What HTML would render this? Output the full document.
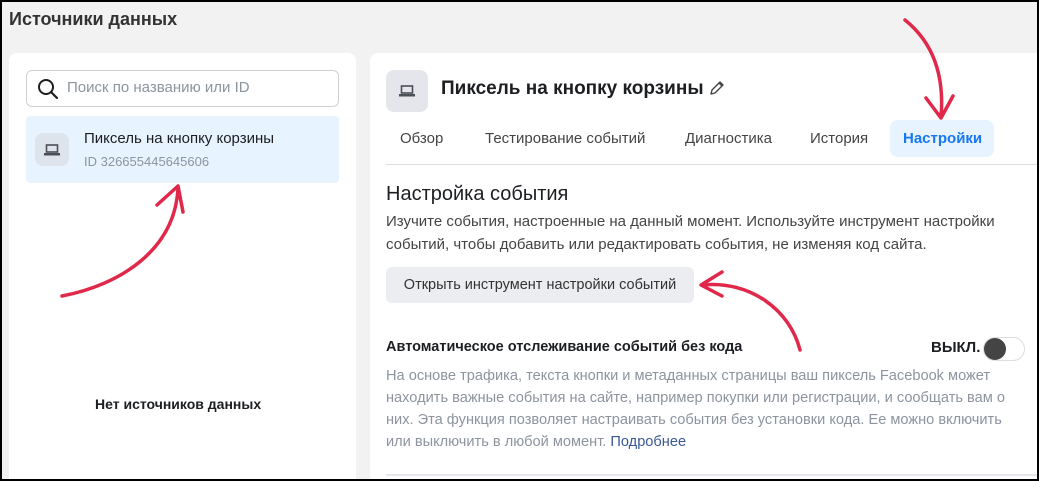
<!DOCTYPE html>
<html><head><meta charset="utf-8"><style>
*{box-sizing:border-box;margin:0;padding:0}
html{overflow:hidden}
body{width:1039px;height:481px;overflow:hidden;background:#f2f2f2;font-family:"Liberation Sans",Arial,sans-serif;color:#1c1e21;position:relative}
.frame{position:absolute;left:0;top:0;width:1039px;height:481px;border:2px solid #000;pointer-events:none;z-index:10}
.abs{position:absolute}
.ico{background:#e4e6eb;border-radius:8px;display:flex;align-items:center;justify-content:center}
</style></head><body>
<div class="frame"></div>
<div class="abs" style="left:9px;top:9px;font-size:18px;font-weight:bold;color:#333">Источники данных</div>

<div class="abs" style="left:9px;top:53px;width:347px;height:428px;background:#fff;border-radius:8px 8px 0 0"></div>
<div class="abs" style="left:26px;top:70px;width:313px;height:37px;border:1px solid #ccd0d5;border-radius:6px;background:#fff"></div>
<svg class="abs" style="left:36px;top:77px" width="24" height="24" viewBox="0 0 24 24"><circle cx="10" cy="10" r="7" fill="none" stroke="#1c1e21" stroke-width="2"/><path d="M15 15l6 6" stroke="#1c1e21" stroke-width="2.2" stroke-linecap="round"/></svg>
<div class="abs" style="left:67px;top:79px;font-size:15px;color:#8d949e">Поиск по названию или ID</div>
<div class="abs" style="left:26px;top:116px;width:313px;height:67px;background:#e7f3ff;border-radius:4px"></div>
<div class="abs ico" style="left:35px;top:133px;width:34px;height:33px;background:#dde4ec">
<svg width="16" height="12" viewBox="0 0 16 12"><rect x="2.5" y="1" width="11" height="7" fill="none" stroke="#4b4f56" stroke-width="1.6"/><rect x="0" y="9" width="16" height="2.5" fill="#4b4f56"/></svg></div>
<div class="abs" style="left:84px;top:130px;font-size:15px;color:#1c1e21">Пиксель на кнопку корзины</div>
<div class="abs" style="left:84px;top:154px;font-size:13px;color:#8d949e">ID 326655445645606</div>
<div class="abs" style="left:95px;top:396px;font-size:14px;font-weight:bold;color:#1c1e21">Нет источников данных</div>

<div class="abs" style="left:370px;top:53px;width:669px;height:428px;background:#fff;border-radius:8px 0 0 0"></div>
<div class="abs ico" style="left:386px;top:70px;width:42px;height:42px">
<svg width="16" height="12" viewBox="0 0 16 12"><rect x="2.5" y="1" width="11" height="7" fill="none" stroke="#4b4f56" stroke-width="1.6"/><rect x="0" y="9" width="16" height="2.5" fill="#4b4f56"/></svg></div>
<div class="abs" style="left:441px;top:78px;font-size:19px;font-weight:bold;color:#1c1e21">Пиксель на кнопку корзины</div>
<svg class="abs" style="left:708px;top:79px" width="18" height="18" viewBox="0 0 18 18"><path d="M3 15l1-4 8-8 3 3-8 8z M11 4l3 3" fill="none" stroke="#444" stroke-width="1.4" stroke-linejoin="round"/></svg>
<div class="abs" style="left:890px;top:120px;width:104px;height:37px;background:#e7f3ff;border-radius:8px"></div>
<div class="abs" style="left:400px;top:130px;font-size:15px;color:#444;white-space:nowrap">Обзор</div>
<div class="abs" style="left:485px;top:130px;font-size:15px;color:#444;white-space:nowrap">Тестирование событий</div>
<div class="abs" style="left:685px;top:130px;font-size:15px;color:#444">Диагностика</div>
<div class="abs" style="left:810px;top:130px;font-size:15px;color:#444">История</div>
<div class="abs" style="left:903px;top:130px;font-size:15px;font-weight:bold;color:#1877f2">Настройки</div>
<div class="abs" style="left:386px;top:164px;width:653px;height:1px;background:#dadde1"></div>
<div class="abs" style="left:386px;top:183px;font-size:20px;color:#1c1e21">Настройка события</div>
<div class="abs" style="left:386px;top:210px;font-size:15px;line-height:23px;color:#444;width:640px">Изучите события, настроенные на данный момент. Используйте инструмент настройки событий, чтобы добавить или редактировать события, не изменяя код сайта.</div>
<div class="abs" style="left:386px;top:267px;width:308px;height:36px;background:#ebedf0;border-radius:6px;font-size:14.5px;color:#333;display:flex;align-items:center;justify-content:center">Открыть инструмент настройки событий</div>
<div class="abs" style="left:386px;top:339px;font-size:14.5px;font-weight:bold;color:#1c1e21">Автоматическое отслеживание событий без кода</div>
<div class="abs" style="left:931px;top:339px;font-size:15px;font-weight:bold;color:#1c1e21">ВЫКЛ.</div>
<div class="abs" style="left:983px;top:337px;width:42px;height:24px;border:1px solid #dadde1;border-radius:12px;background:#fff"></div>
<div class="abs" style="left:984px;top:338px;width:22px;height:22px;border-radius:50%;background:#444"></div>
<div class="abs" style="left:386px;top:365px;font-size:14.6px;line-height:22px;color:#8d949e;width:638px">На основе трафика, текста кнопки и метаданных страницы ваш пиксель Facebook может находить важные события на сайте, например покупки или регистрации, и сообщать вам о них. Эта функция позволяет настраивать события без установки кода. Ее можно включить или выключить в любой момент. <span style="color:#385898">Подробнее</span></div>
<div class="abs" style="left:386px;top:474px;width:653px;height:2px;background:#e4e6eb"></div>

<svg class="abs" style="left:0;top:0;z-index:5" width="1039" height="481">
<g fill="none" stroke="#e0294a" stroke-width="3.5" stroke-linecap="round" stroke-linejoin="round">
<path d="M62 296 C120 285 175 250 178 188"/><path d="M157 205 L178 186 L183 212"/>
<path d="M905 20 C930 40 945 70 941 117"/><path d="M926 98 L941 118 L953 96"/>
<path d="M800 350 C790 310 750 280 702 285"/><path d="M722 272 L701 285 L722 296"/>
</g></svg>
</body></html>
